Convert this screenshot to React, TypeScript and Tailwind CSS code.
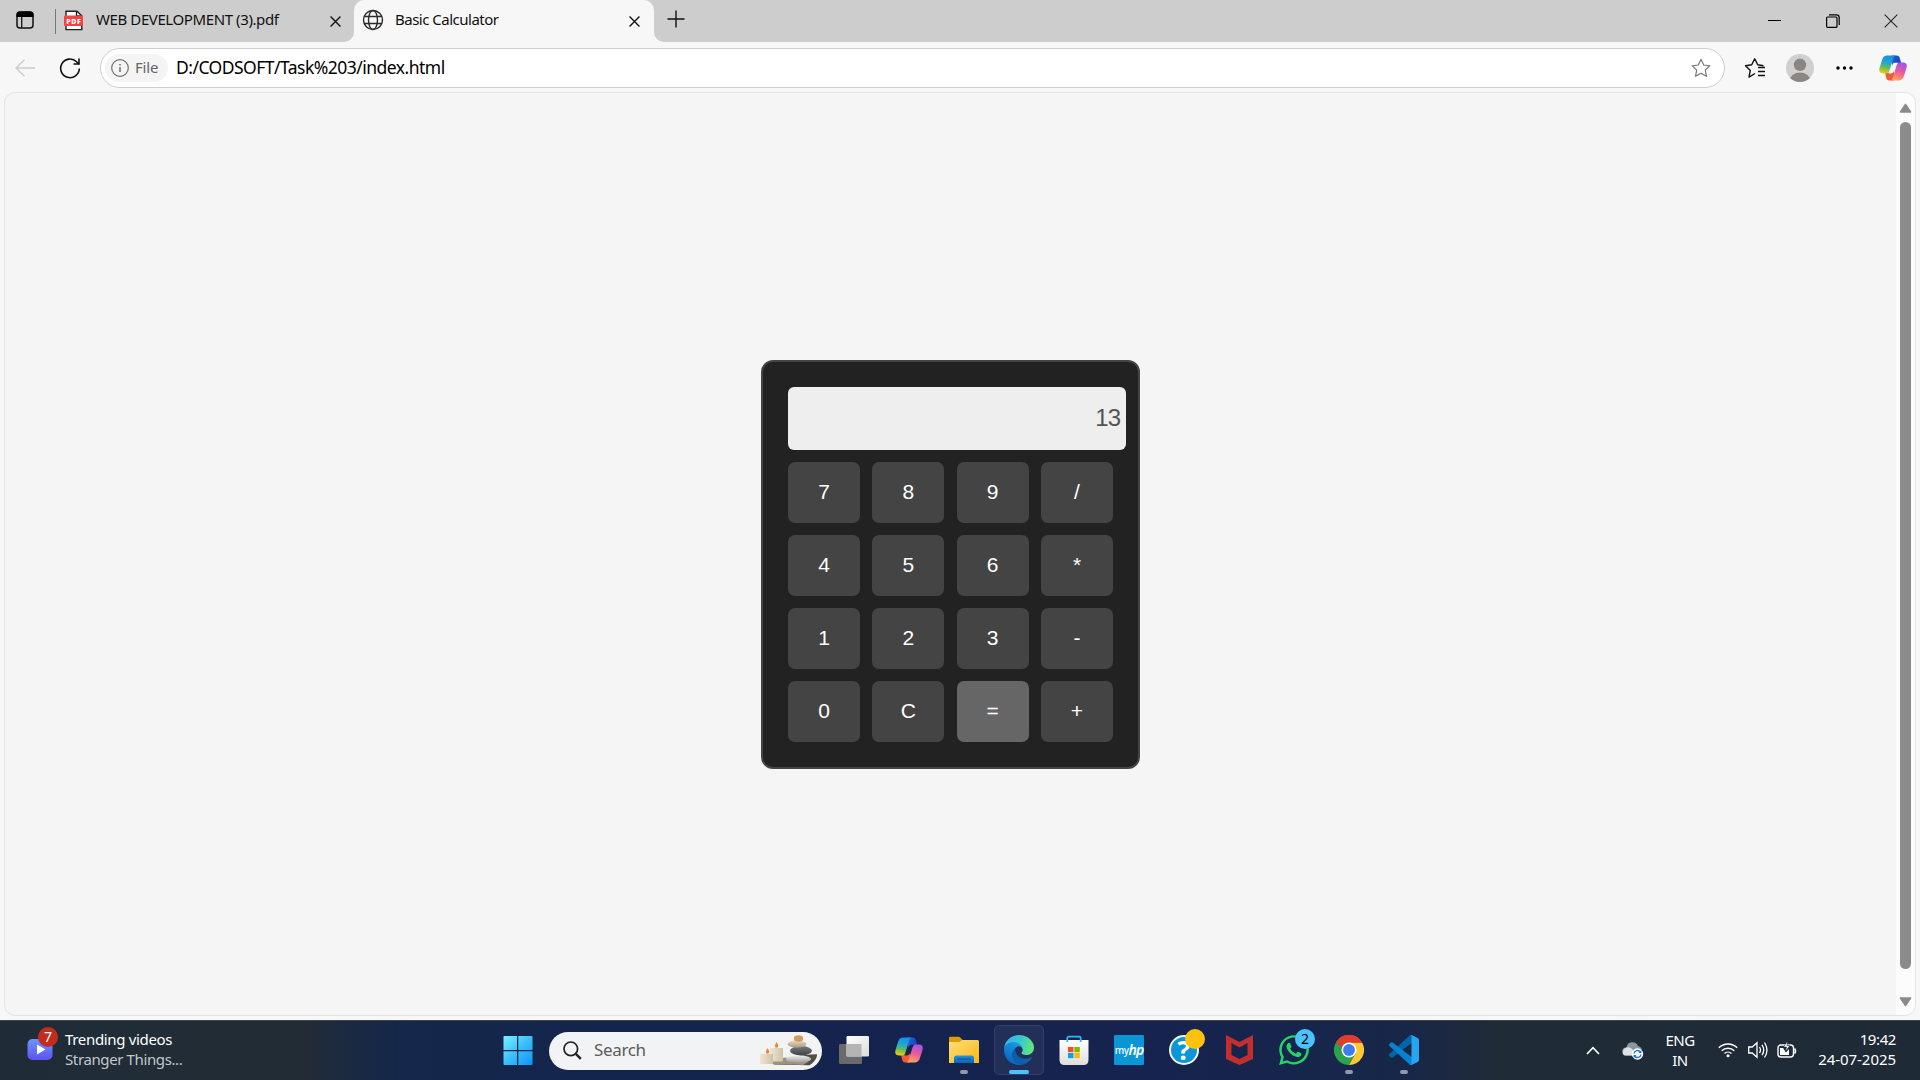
import React from "react";
import { FaWhatsapp } from "react-icons/fa";

const UI = "font-['Noto_Sans','Open_Sans',sans-serif]";

function PdfIcon() {
  return (
    <svg width="20" height="21" viewBox="0 0 20 21" className="block">
      <path d="M2 1.2h11l4.8 4.600V19.600H2Z" fill="#fff" stroke="#222" strokeWidth="1.400" />
      <path d="M12.500 1v5h5.300" fill="none" stroke="#222" strokeWidth="1.400" />
      <rect x="0" y="5.500" width="19" height="10.500" rx="1" fill="#f64242" />
      <text x="9.500" y="13.600" textAnchor="middle" fontSize="7" fontWeight="800" fill="#fff" fontFamily="Open Sans" textLength="14.500">PDF</text>
    </svg>
  );
}

function Cross({ size = 12, w = 1.5, color = "#111" }: { size?: number; w?: number; color?: string }) {
  return (
    <svg width={size} height={size} viewBox="0 0 12 12" className="block shrink-0">
      <path d="M.6.6l10.800 10.800M11.400.6L.6 11.400" stroke={color} strokeWidth={w} fill="none" />
    </svg>
  );
}

function Globe() {
  return (
    <svg width="22" height="22" viewBox="0 0 22 22" fill="none" stroke="#2b2b2b" strokeWidth="1.400" className="block shrink-0">
      <circle cx="11" cy="11" r="9.500" />
      <ellipse cx="11" cy="11" rx="4.500" ry="9.500" />
      <path d="M2.300 7.500h17.400M2.300 14.500h17.400" />
    </svg>
  );
}

function Copilot({ id, gap }: { id: string; gap: string }) {
  return (
    <svg width="28" height="26" viewBox="0 0 28 26" className="block shrink-0">
      <defs>
        <linearGradient id={id + "a"} x1="0.500" y1="0" x2="0.300" y2="1">
          <stop offset="0" stopColor="#1a8fe8" />
          <stop offset=".35" stopColor="#1ba5d8" />
          <stop offset=".65" stopColor="#5cbb60" />
          <stop offset="1" stopColor="#f3cd0a" />
        </linearGradient>
        <linearGradient id={id + "b"} x1="0.700" y1="0" x2="0.400" y2="1">
          <stop offset="0" stopColor="#a550f0" />
          <stop offset=".5" stopColor="#ea5a9a" />
          <stop offset="1" stopColor="#ffa060" />
        </linearGradient>
        <linearGradient id={id + "c"} x1="0" y1="0" x2="1" y2="1">
          <stop offset="0" stopColor="#1c62dc" />
          <stop offset="1" stopColor="#1238b8" />
        </linearGradient>
      </defs>
      <path d="M13 .5h4.600c1.700 0 2.600.8 3.100 2.500l1.500 5h-3c-1.600 0-2.500.7-3 2.200L13 20Z" fill={`url(#${id}c)`} />
      <path d="M15 25.500h-4.600c-1.700 0-2.600-.8-3.100-2.500L6 18h2.800c1.600 0 2.500-.7 3-2.200L15 6Z" fill="#f05a38" />
      <path d="M8.500.5h8.200c-1.500.5-2 1.500-2.500 3l-3.800 12.200c-.5 1.600-1.400 2.700-3.200 2.700H3.500C.8 18.400-.3 16.300.4 13.500L3.100 4.700C3.900 2 5.600.5 8.500.5Z" fill={`url(#${id}a)`} />
      <path d="M19.500 25.500h-8.200c1.500-.5 2-1.500 2.500-3l3.800-12.200c.5-1.600 1.400-2.700 3.200-2.700h3.700c2.700 0 3.800 2.100 3.100 4.900l-2.700 8.800c-.8 2.700-2.500 4.200-5.400 4.200Z" fill={`url(#${id}b)`} />
      <path d="M13.200 10.200q.8-2.400 3-2.400h3q-1.400.6-2 2.400L15 16q-.8 2.400-3 2.400H9.500q1.200-.6 1.800-2.400Z" fill={gap} />
    </svg>
  );
}

function TabBar() {
  return (
    <div className="flex h-[42px] bg-[#cdcdcd] text-[15px] text-[#111]">
      <div className="flex w-[354px] items-center bg-[#f7f7f7]">
        <div className="flex h-full w-full items-center rounded-br-[10px] bg-[#cdcdcd] pl-4">
          <svg width="18" height="18" viewBox="0 0 18 18" className="mt-[-2px] shrink-0">
            <rect x="1" y="1" width="16" height="16" rx="3" fill="none" stroke="#111" strokeWidth="1.500" />
            <path d="M.5 6V4Q.5.5 4 .5h10q3.500 0 3.500 3.500v2Z" fill="#000" />
            <path d="M5.700 5v12" stroke="#111" strokeWidth="1.300" />
          </svg>
          <div className="ml-[21px] h-[25px] w-px bg-[#777]" />
          <div className="mt-[-2px] ml-2"><PdfIcon /></div>
          <span className="mt-[-4px] ml-3 w-[234px] shrink-0 tracking-[-0.400px] whitespace-nowrap">WEB DEVELOPMENT (3).pdf</span>
          <Cross size={11} />
        </div>
      </div>
      <div className="flex w-[300px] items-center rounded-t-[10px] bg-[#f7f7f7] pl-[8px]">
        <div className="mt-[-2px]"><Globe /></div>
        <span className="mt-[-4px] ml-[11px] w-[234px] tracking-[-0.500px] whitespace-nowrap">Basic Calculator</span>
        <Cross size={11} />
      </div>
      <div className="flex-1 bg-[#f7f7f7]">
        <div className="flex h-full items-center rounded-bl-[10px] bg-[#cdcdcd] pl-[13px]">
          <svg width="18" height="18" viewBox="0 0 18 18" className="mt-[-4px]">
            <path d="M9 .5v17M.5 9h17" stroke="#111" strokeWidth="1.400" />
          </svg>
          <div className="ml-auto flex items-center pr-[22px]">
            <div className="mt-[-1px] h-px w-[13px] bg-black" />
            <svg width="14" height="14" viewBox="0 0 14 14" className="ml-[45px]" fill="none" stroke="#000" strokeWidth="1.200">
              <rect x=".6" y="3" width="10.400" height="10.400" rx="1" />
              <path d="M3 .8h7.500q2.700 0 2.700 2.700V11" />
            </svg>
            <div className="ml-[44px]"><Cross size={14} w={0.900} color="#222" /></div>
          </div>
        </div>
      </div>
    </div>
  );
}

const STAR = "M10 1.300l2.700 5.700 6.100.8-4.500 4.300 1.200 6.200L10 15.300l-5.500 3 1.200-6.200L1.200 7.800l6.100-.8Z";

function Toolbar() {
  return (
    <div className="flex h-[50px] items-center bg-[#f7f7f7] pt-[2px] pl-[15px]">
      <svg width="20" height="18" viewBox="0 0 20 18" fill="none" stroke="#cbcbcb" strokeWidth="1.400">
        <path d="M9.500.7L1 9l8.500 8.300M1 9h19" />
      </svg>
      <svg width="22" height="22" viewBox="0 0 22 22" fill="none" stroke="#111" strokeWidth="1.600" className="ml-6">
        <path d="M20.300 11.500A9.300 9.300 0 1 1 17.600 4.800L20 7" />
        <path d="M20 1.500V7h-5.500" />
      </svg>
      <div className="ml-[19px] flex h-10 w-[1625px] items-center rounded-full border border-[#cfcfcf] bg-white pl-1">
        <div className="flex h-7 w-[63px] items-center rounded-full bg-[#f4f4f4] pl-[6px]">
          <svg width="18" height="18" viewBox="0 0 18 18" fill="none" stroke="#707070" strokeWidth="1.200">
            <circle cx="9" cy="9" r="8.300" />
            <path d="M9 8v5M9 5v1.500" strokeWidth="1.500" />
          </svg>
          <span className="mt-[-1px] ml-[6px] text-[15px] tracking-[-0.200px] text-[#666]">File</span>
        </div>
        <span className="mt-[-1px] ml-[8px] text-[17.500px] tracking-[-0.520px] whitespace-nowrap text-black">D:/CODSOFT/Task%203/index.html</span>
        <svg width="22" height="22" viewBox="-1 -1 22 22" fill="none" stroke="#777" strokeWidth="1.200" strokeLinejoin="round" className="mr-[12px] ml-auto">
          <path d={STAR} />
        </svg>
      </div>
      <svg width="22" height="22" viewBox="0 0 22 22" fill="none" stroke="#111" strokeWidth="1.400" strokeLinejoin="round" className="ml-[19px]">
        <path d="M11 16.500l-6 3.600 1.300-6.700L1.500 8.700l6.200-.9L10.700 1.800l3 6 5.800.9M14 10.500h7M14 14.500h7M14 18.500h7" />
      </svg>
      <svg width="28" height="28" viewBox="0 0 28 28" className="ml-[20px]">
        <defs><clipPath id="avatar"><circle cx="14" cy="14" r="14" /></clipPath></defs>
        <circle cx="14" cy="14" r="14" fill="#d2d0ce" />
        <g clipPath="url(#avatar)" fill="#8a8684">
          <circle cx="14" cy="10.800" r="6.200" />
          <ellipse cx="14" cy="27" rx="10.500" ry="8.500" />
        </g>
      </svg>
      <svg width="17" height="4" viewBox="0 0 17 4" className="ml-[22px]">
        <circle cx="2" cy="2" r="1.700" /><circle cx="8.500" cy="2" r="1.700" /><circle cx="15" cy="2" r="1.700" />
      </svg>
      <div className="ml-[26px]"><Copilot id="t" gap="#fff" /></div>
    </div>
  );
}

const KEYS = ["7", "8", "9", "/", "4", "5", "6", "*", "1", "2", "3", "-", "0", "C", "=", "+"];

function Calculator() {
  return (
    <div className="h-[409px] w-[379px] rounded-[12px] border-2 border-[#444] bg-[#222] pt-[25px] pl-[25px] font-['Liberation_Sans',Arial,sans-serif]">
      <div className="flex h-[63px] w-[338px] items-center justify-end rounded-[6px] bg-[#eee] pr-[5px] pb-px text-[24px] tracking-[-1px] text-[#545454]">
        <span className="mr-px">13</span>
      </div>
      <div className="mt-3 grid grid-cols-[repeat(4,72px)] gap-x-[12.34px] gap-y-3">
        {KEYS.map((k) => (
          <button key={k} className={`h-[61px] rounded-[7px] pb-[2px] text-[21px] leading-none text-white ${k === "=" ? "bg-[#666]" : "bg-[#444]"}`}>{k}</button>
        ))}
      </div>
    </div>
  );
}

function Page() {
  return (
    <div className="h-[928px] bg-[#f7f7f7] pl-[4px]">
      <div className="flex h-[924px] w-[1912px] overflow-hidden rounded-[11px] border border-[#e4e4e4] bg-[#f5f5f5]">
        <div className="flex flex-1 pt-[267px] pl-[756px]"><Calculator /></div>
        <div className="flex w-[19px] flex-col items-center bg-[#fcfcfc] pt-[10px]">
          <svg width="13" height="10" viewBox="0 0 13 10"><path d="M6.500 1.500L11.500 9H1.500Z" fill="#8b8b8b" stroke="#8b8b8b" strokeWidth="1.600" strokeLinejoin="round" /></svg>
          <div className="mt-[9px] h-[847px] w-[11px] rounded-full bg-[#8b8b8b]" />
          <svg width="13" height="10" viewBox="0 0 13 10" className="mt-[28px]"><path d="M6.500 8.500L11.500 1H1.500Z" fill="#8b8b8b" stroke="#8b8b8b" strokeWidth="1.600" strokeLinejoin="round" /></svg>
        </div>
      </div>
    </div>
  );
}

function StartIcon() {
  return (
    <svg width="30" height="30" viewBox="0 0 30 30">
      <defs><linearGradient id="win" x1="0" y1="0" x2="30" y2="30" gradientUnits="userSpaceOnUse"><stop offset="0" stopColor="#7df3ff" /><stop offset=".5" stopColor="#3cc0fb" /><stop offset="1" stopColor="#0c92fb" /></linearGradient></defs>
      <path d="M.5 1.500q0-.5 1-.5H14v14H.5ZM15.300 1H28.500q1 0 1 1v13H15.300ZM.5 16.200H14V30H1.500q-1 0-1-1ZM15.300 16.200h14.200V29q0 1-1 1H15.300Z" fill="url(#win)" />
    </svg>
  );
}

function SearchArt() {
  return (
    <svg width="60" height="31" viewBox="0 0 60 31" className="block">
      <defs>
        <linearGradient id="wax" x1="0" x2="1"><stop offset="0" stopColor="#efe5d0" /><stop offset="1" stopColor="#cfc2a6" /></linearGradient>
        <linearGradient id="st1" x1="0" y1="0" x2="0" y2="1"><stop offset="0" stopColor="#e9ddc8" /><stop offset="1" stopColor="#ab997d" /></linearGradient>
        <linearGradient id="st2" x1="0" y1="0" x2="0" y2="1"><stop offset="0" stopColor="#777b80" /><stop offset="1" stopColor="#3e4145" /></linearGradient>
        <linearGradient id="st3" x1="0" y1="0" x2="0" y2="1"><stop offset="0" stopColor="#f0f0f0" /><stop offset="1" stopColor="#9b9b9b" /></linearGradient>
      </defs>
      <path d="M42 20l16-.8c.4 4-4 9-7.500 11L14 29.500l12-5Z" fill="#554d42" />
      <path d="M2 28.500l24-6 24 4-6 3.500Z" fill="#9b927f" />
      <rect x="11" y="13" width="13" height="13.500" rx="1" fill="url(#wax)" />
      <rect x="1" y="19" width="13" height="10" rx="1" fill="url(#wax)" />
      <path d="M17.500 7q3.600 5-.1 5.800Q14.500 12 17.500 7ZM8.500 13q3.600 5-.1 5.800Q5.500 18 8.500 13Z" fill="#f7812b" />
      <ellipse cx="39.500" cy="24" rx="12.500" ry="3.700" fill="url(#st3)" />
      <ellipse cx="42" cy="15.700" rx="11" ry="4.600" fill="url(#st2)" />
      <ellipse cx="38" cy="9" rx="9.500" ry="3.700" fill="url(#st1)" />
      <ellipse cx="39.500" cy="3.500" rx="4.600" ry="3.300" fill="#d29a5e" />
    </svg>
  );
}

function TaskViewIcon() {
  return (
    <svg width="30" height="30" viewBox="0 0 30 30">
      <defs><linearGradient id="tv" x1="0" y1="0" x2="1" y2="1"><stop offset="0" stopColor="#fff" /><stop offset="1" stopColor="#dcdcdc" /></linearGradient></defs>
      <rect x="0" y="9" width="23" height="20" rx="1.200" fill="#6a6a6a" />
      <rect x="7.500" y="1" width="22.500" height="20.500" rx="1.200" fill="url(#tv)" />
      <rect x="7.500" y="9" width="15" height="12.500" fill="#b4b4b4" />
    </svg>
  );
}

function FolderIcon() {
  return (
    <svg width="30" height="30" viewBox="0 0 30 30">
      <defs>
        <linearGradient id="fo" x1="0" y1="0" x2="1" y2="1"><stop offset="0" stopColor="#ffdf7b" /><stop offset="1" stopColor="#fbb714" /></linearGradient>
        <linearGradient id="fb" x1="0" y1="0" x2="0" y2="1"><stop offset="0" stopColor="#1f95e5" /><stop offset="1" stopColor="#0b62b5" /></linearGradient>
      </defs>
      <path d="M0 3q0-1.200 1.200-1.200h8.300q1 0 1.700.7l2.600 2.500V10H0Z" fill="#dd9b07" />
      <path d="M0 7h10q1 0 1.800-.8L13 5h15.500Q30 5 30 6.500V28H0Z" fill="url(#fo)" />
      <path d="M5 28v-5q0-2.500 2.500-2.500h15Q25 20.500 25 23v5Z" fill="url(#fb)" />
      <path d="M8.500 24h13" stroke="#0a4c92" strokeWidth="1" />
    </svg>
  );
}

function EdgeIcon() {
  return (
    <svg width="30" height="30" viewBox="0 0 256 256">
      <defs>
        <linearGradient id="e1" x1="60" y1="178" x2="240" y2="178" gradientUnits="userSpaceOnUse"><stop offset="0" stopColor="#0c5cab" /><stop offset="1" stopColor="#1260b0" /></linearGradient>
        <linearGradient id="e2" x1="140" y1="70" x2="40" y2="230" gradientUnits="userSpaceOnUse"><stop offset="0" stopColor="#1b9de2" /><stop offset=".4" stopColor="#1387d8" /><stop offset="1" stopColor="#0669bf" /></linearGradient>
        <linearGradient id="e3" x1="10" y1="60" x2="250" y2="130" gradientUnits="userSpaceOnUse"><stop offset="0" stopColor="#35b8f0" /><stop offset=".45" stopColor="#36c4d8" /><stop offset="1" stopColor="#66eb6e" /></linearGradient>
      </defs>
      <path d="M231 190.500c-3.400 1.800-6.900 3.400-10.500 4.700a101.500 101.500 0 0 1-35.900 6.500c-47.300 0-88.500-32.500-88.500-74.300a31.500 31.500 0 0 1 16.400-27.300c-42.800 1.800-53.800 46.400-53.800 72.500 0 74 68.100 81.400 82.800 81.400 7.900 0 19.800-2.300 27-4.600l1.300-.4a128.300 128.300 0 0 0 66.600-52.800 4 4 0 0 0-5.400-5.700Z" fill="url(#e1)" />
      <path d="M105.700 241.400a79.200 79.200 0 0 1-22.700-21.300 80.700 80.700 0 0 1 29.500-120c3.200-1.500 8.500-4.100 15.600-4a32.400 32.400 0 0 1 25.700 13 31.900 31.900 0 0 1 6.300 18.700c0-.2 24.500-79.600-80-79.600-43.900 0-80 41.700-80 78.200a130.200 130.200 0 0 0 12.100 56 128 128 0 0 0 156.400 67.100 75.500 75.500 0 0 1-62.800-8Z" fill="url(#e2)" />
      <path d="M152.300 148.900c-.8 1-3.300 2.500-3.300 5.700 0 2.600 1.700 5.100 4.700 7.200 14.400 10 41.500 8.700 41.600 8.700a59.600 59.600 0 0 0 30.300-8.300 61.400 61.400 0 0 0 30.400-52.900c.3-22.400-8-37.300-11.300-43.900C223.500 23.900 177.700 0 128 0A128 128 0 0 0 0 126.200c.5-36.500 36.800-66 80-66 3.500 0 23.500.3 42 10 16.300 8.600 24.900 18.900 30.800 29.200 6.200 10.700 7.300 24.100 7.300 29.500 0 5.300-2.700 13.300-7.800 19.900Z" fill="url(#e3)" />
    </svg>
  );
}

function StoreIcon() {
  return (
    <svg width="30" height="30" viewBox="0 0 30 30">
      <defs><linearGradient id="sb" x1="0" y1="0" x2="0" y2="1"><stop offset="0" stopColor="#fff" /><stop offset="1" stopColor="#dedede" /></linearGradient></defs>
      <path d="M.5 5h29v20q0 5-5 5h-19q-5 0-5-5Z" fill="url(#sb)" />
      <path d="M8.300 7V3q0-1.300 1.300-1.300h10.800Q21.700 1.700 21.700 3v4" fill="none" stroke="#30b5ee" strokeWidth="1.800" />
      <path fill="#f25022" d="M9 12h5.500v5.200H9z" /><path fill="#7fba00" d="M15.300 12h5.500v5.200h-5.500z" />
      <path fill="#00a4ef" d="M9 18h5.500v5.200H9z" /><path fill="#ffb900" d="M15.300 18h5.500v5.200h-5.500z" />
    </svg>
  );
}

function HelpIcon() {
  return (
    <div className="flex size-[30px] items-center justify-center rounded-full border-2 border-[#f4f8fb] bg-[#0a96d8] font-['Open_Sans',sans-serif] text-[27px] leading-none font-bold text-white">
      <span className="mt-[-1px]">?</span>
    </div>
  );
}

function McAfeeIcon() {
  return (
    <svg width="27" height="30" viewBox="0 0 27 30">
      <path d="M0 0L13.500 7 27 0V24L13.500 30 0 24ZM5.500 8v12l8 4 8-4V8l-8 4.500Z" fill="#c22f2c" fillRule="evenodd" />
    </svg>
  );
}

function ChromeIcon() {
  return (
    <svg width="30" height="30" viewBox="0 0 48 48">
      <path d="M24 24L3.200 12A24 24 0 0 1 44.800 12Z" fill="#e33b2e" />
      <path d="M3.200 12A24 24 0 0 0 24 48L34.400 30 24 24 13.600 30Z" fill="#2ba24c" />
      <path d="M44.800 12A24 24 0 0 1 24 48L34.400 30 30 14 24 12Z" fill="#fcc934" />
      <path d="M3.200 12A24 24 0 0 1 44.800 12H24L13.600 18Z" fill="#e33b2e" />
      <path d="M3.200 12L13.600 30 16 20 24 12Z" fill="#2ba24c" />
      <path d="M3.200 12A24 24 0 0 1 44.800 12H24A12 12 0 0 0 13.600 18L10 20Z" fill="#e33b2e" />
      <path d="M3.200 12L13.600 30 14 18 8 9Z" fill="#2ba24c" />
      <path d="M3.200 12L5 9l9 6-1.500 5Z" fill="#e33b2e" />
      <circle cx="24" cy="24" r="12" fill="#fff" />
      <circle cx="24" cy="24" r="9.500" fill="#3b7ded" />
    </svg>
  );
}

function CodeIcon() {
  return (
    <svg width="30" height="30" viewBox="0 0 100 100">
      <path fill="#0065a9" d="M96.461 10.796L75.857.876C73.472-.273 70.622.212 68.750 2.083L1.299 63.583c-1.815 1.654-1.813 4.511.004 6.162l5.510 5.009c1.485 1.350 3.722 1.450 5.321.237L93.361 13.370C96.086 11.303 100 13.246 100 16.667v-.240c0-2.400-1.375-4.589-3.539-5.631Z" />
      <path fill="#0a80d0" d="M96.461 89.204l-20.604 9.920c-2.385 1.149-5.235.664-7.107-1.207L1.299 36.417c-1.815-1.654-1.813-4.511.004-6.162l5.510-5.009c1.485-1.350 3.722-1.450 5.321-.237L93.361 86.630C96.086 88.697 100 86.754 100 83.333v.240c0 2.400-1.375 4.589-3.539 5.631Z" />
      <path fill="#26a5f2" d="M75.858 99.126c-2.386 1.148-5.236.662-7.108-1.209C71.056 100.223 75 98.590 75 95.328V4.672C75 1.410 71.056-.223 68.750 2.083 70.622.211 73.472-.274 75.858.874l20.601 9.907C98.623 11.822 100 14.011 100 16.413v67.174c0 2.402-1.377 4.592-3.541 5.633Z" />
    </svg>
  );
}

function AppButton({ children, run, active, badge }: { children: React.ReactNode; run?: boolean; active?: boolean; badge?: React.ReactNode }) {
  return (
    <div className={`relative mt-[-1px] mr-[5px] flex h-[50px] w-[50px] flex-col items-center rounded-[5px] ${active ? "border border-[#33406a] bg-[#222f59] pt-[9px]" : "pt-[10px]"}`}>
      <div className="flex size-[30px] shrink-0 items-center justify-center">{children}</div>
      {run && <i className="mt-[5px] h-[4px] w-[8px] rounded-full bg-[#9298ad]" />}
      {active && <i className="mt-[5px] h-[4px] w-[20px] rounded-full bg-[#4cc2ff]" />}
      {badge}
    </div>
  );
}

function Taskbar() {
  return (
    <div className="flex h-[60px] items-center border-t border-[#3a4552] bg-[linear-gradient(90deg,#1f2c38_0px,#222c34_300px,#1b2a40_345px,#15274a_400px,#13244d_700px,#16234f_1150px,#172748_1400px,#1b2842_1440px,#1f2b36_1500px,#1e2b37_1920px)] text-white">
      <div className="relative flex h-full w-[493px] items-center pl-[27px]">
        <svg width="26" height="21" viewBox="0 0 26 21" className="mt-[-3px]">
          <defs><linearGradient id="vid" x1="0" y1="0" x2="0" y2="1"><stop offset="0" stopColor="#6b94ff" /><stop offset="1" stopColor="#5b55ee" /></linearGradient></defs>
          <rect x=".5" width="25" height="21" rx="5" fill="url(#vid)" />
          <path d="M10 5.500l8.500 5-8.500 5Z" fill="#fff" />
        </svg>
        <div className="absolute top-[6px] left-[38px] flex size-[20px] items-center justify-center rounded-full bg-[#c42b1c] text-[14px] leading-none">7</div>
        <div className="mt-[-4px] ml-[12px] text-[15px] leading-[20px] whitespace-nowrap">
          <div className="tracking-[-0.330px]">Trending videos</div>
          <div className="tracking-[-0.380px] text-[#c3c8cb]">Stranger Things...</div>
        </div>
      </div>
      <AppButton><StartIcon /></AppButton>
      <div className="mr-[7px] ml-px flex h-[38px] w-[273px] items-center rounded-full bg-[#f2f3f5] pl-[14px]">
        <svg width="19" height="19" viewBox="0 0 19 19" fill="none" stroke="#222" className="shrink-0">
          <circle cx="7.800" cy="7.800" r="6.800" strokeWidth="1.700" />
          <path d="M12.800 12.800l5 5" strokeWidth="2.500" />
        </svg>
        <span className="mt-[-1px] ml-3 text-[17px] tracking-[-0.350px] text-[#5c5c5c]">Search</span>
        <div className="mr-[3px] ml-auto"><SearchArt /></div>
      </div>
      <AppButton><TaskViewIcon /></AppButton>
      <AppButton><Copilot id="b" gap="#142450" /></AppButton>
      <AppButton run><FolderIcon /></AppButton>
      <AppButton active><EdgeIcon /></AppButton>
      <AppButton><StoreIcon /></AppButton>
      <AppButton>
        <div className="flex size-[30px] items-center justify-center rounded-[1px] bg-[#0a96d6] text-[10px] leading-none tracking-[-0.500px]">
          <span className="font-medium">my</span><span className="text-[14px] font-semibold tracking-[-1px] italic">hp</span>
        </div>
      </AppButton>
      <AppButton badge={<i className="absolute top-[4px] left-[26px] size-[20px] rounded-full bg-[#ffc20e]" />}><HelpIcon /></AppButton>
      <AppButton><McAfeeIcon /></AppButton>
      <AppButton badge={<div className="absolute top-[4px] left-[26px] flex size-[20px] items-center justify-center rounded-full bg-[#4cc2ff] text-[14px] leading-none text-black">2</div>}>
        <FaWhatsapp size={34} color="#25d366" className="shrink-0" />
      </AppButton>
      <AppButton run><ChromeIcon /></AppButton>
      <AppButton run><CodeIcon /></AppButton>
      <svg width="14" height="9" viewBox="0 0 14 9" fill="none" stroke="#fff" strokeWidth="1.700" className="ml-[152px]"><path d="M1 8l6-6.300L13 8" /></svg>
      <svg width="22" height="19" viewBox="0 0 22 19" className="ml-[22px]">
        <path d="M4 14.500a4 4 0 0 1 .5-8A6 6 0 0 1 16 5q4 1 4 5l-4 4.500Z" fill="#8f959a" />
        <path d="M1 13q-1-5 3.500-6.500Q8 5.500 10 8l5 6.500H4Q2 14.500 1 13Z" fill="#dfe2e4" />
        <circle cx="15.500" cy="13" r="5.700" fill="#fff" />
        <path d="M12 12.500a3.600 3.600 0 0 1 6.500-1.500M19 13.500a3.600 3.600 0 0 1-6.500 1.500" fill="none" stroke="#1476cf" strokeWidth="1.400" />
        <path d="M19.400 9v3h-3ZM11.600 17v-3h3Z" fill="#1476cf" />
      </svg>
      <div className="mt-[-2px] ml-[19px] w-[34px] text-center text-[15px] leading-[20px] tracking-[-0.500px]">ENG<br />IN</div>
      <svg width="20" height="16" viewBox="0 0 20 16" fill="none" stroke="#fff" strokeWidth="1.400" className="mt-[-2px] ml-[21px]">
        <path d="M.8 5.800a13 13 0 0 1 18.400 0M3.700 8.800a9 9 0 0 1 12.600 0M6.500 11.600a5 5 0 0 1 7 0" />
        <circle cx="10" cy="13.800" r="1.500" fill="#fff" stroke="none" />
      </svg>
      <svg width="20" height="18" viewBox="0 0 20 18" fill="none" stroke="#fff" strokeWidth="1.300" className="mt-[-2px] ml-[10px]">
        <path d="M.7 6h3.500L9 1.700v14.600L4.200 12H.7ZM11.500 6q2 3 0 6M14 3.800q3.500 5.200 0 10.400M16.500 1.500q5 7.500 0 15" />
      </svg>
      <svg width="20" height="17" viewBox="0 0 20 17" className="mt-[-3px] ml-[9px]">
        <rect x="1" y="4" width="15.500" height="12" rx="3" fill="none" stroke="#fff" strokeWidth="1.400" />
        <path d="M17.500 7.500q2 2.500 0 5" fill="none" stroke="#fff" strokeWidth="1.600" />
        <path d="M3 7h3l3 4.500L12 8v6H3Z" fill="#fff" />
        <path d="M10.500 0L6.500 6h3l-1.200 4.500L13 4.500h-3Z" fill="#fff" stroke="#1e2b37" strokeWidth=".6" />
      </svg>
      <div className="mt-[-4px] ml-auto pr-[24px] text-right text-[15px] leading-[20px] tracking-[-0.400px] whitespace-nowrap">
        <div>19:42</div>
        <div className="tracking-[-0.050px]">24-07-2025</div>
      </div>
    </div>
  );
}

export default function App() {
  return (
    <div className={`h-[1080px] w-[1920px] overflow-hidden bg-[#f7f7f7] ${UI}`}>
      <TabBar />
      <Toolbar />
      <Page />
      <Taskbar />
    </div>
  );
}
